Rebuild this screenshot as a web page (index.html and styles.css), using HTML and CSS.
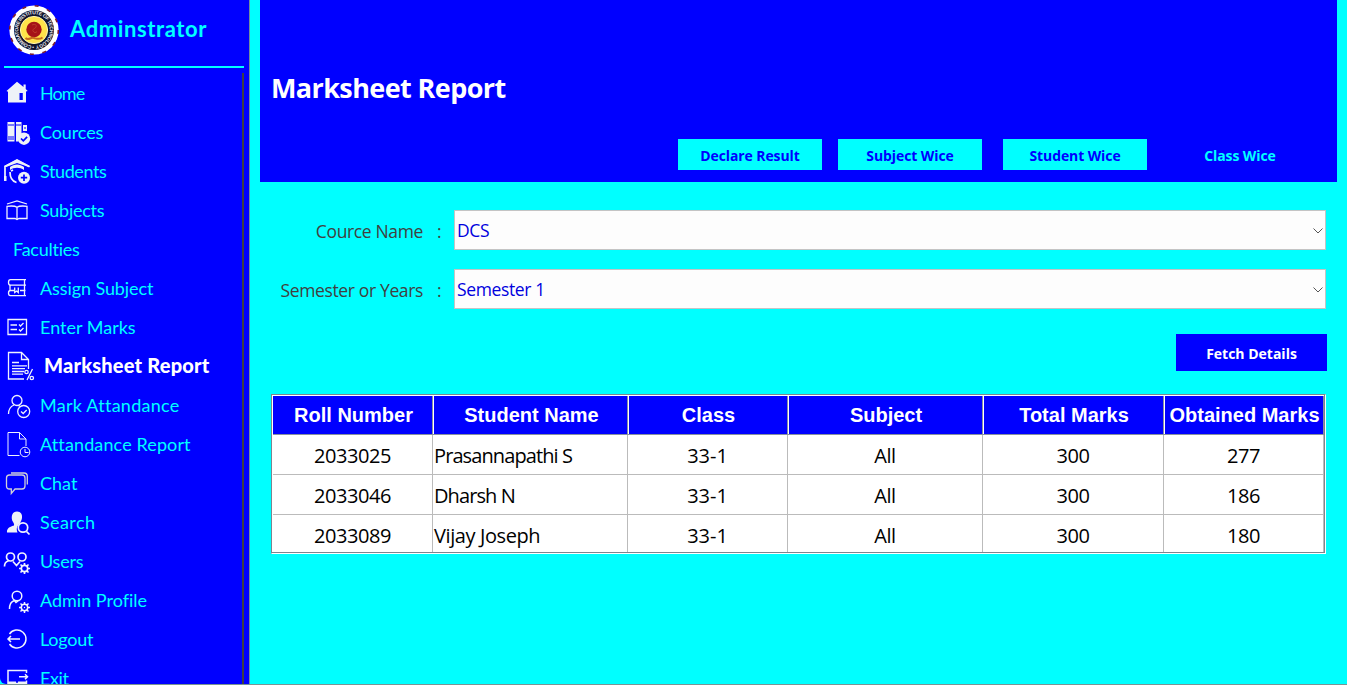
FILE: index.html
```html
<!DOCTYPE html>
<html lang="en">
<head>
<meta charset="utf-8">
<title>Marksheet Report</title>
<link rel="stylesheet" href="styles.css">
</head>
<body>
<div class="app">
  <aside class="sidebar">
    <header class="brand">
      <svg class="logo" viewBox="0 0 52 52">
        <defs><path id="ring" d="M26 41.800A15.800 15.800 0 1 1 26.100 41.800"/></defs>
        <circle cx="26" cy="26" r="24.600" fill="#fff"/>
        <circle cx="26" cy="26" r="24.300" fill="none" stroke="#7b1a2c" stroke-width="1.600" stroke-dasharray="4 8.720"/>
        <circle cx="26" cy="26" r="20" fill="#10142e"/>
        <circle cx="26" cy="26" r="13.600" fill="#ffe34a" stroke="#fff6b0" stroke-width="1"/>
        <circle cx="26" cy="25.500" r="7.700" fill="#a51218"/>
        <path d="M24 21c3-1.500 5 0 4 2s-4 2-3 4 3 2 4 .5" fill="none" stroke="#c04a30" stroke-width=".7"/>
        <path d="M17.500 34c3 3 5-1 8.500 0s5 2 8.500-.5" fill="none" stroke="#c86a20" stroke-width="2"/>
        <text class="logo-text"><textPath href="#ring" textLength="97">• COIMBATORE INSTITUTE OF TECHNOLOGY</textPath></text>
      </svg>
      <span class="brand-name">Adminstrator</span>
    </header>
    <nav class="menu">
      <a class="item home"><svg class="icon" viewBox="0 0 36 39"><path class="f" d="M17 7.700 23.500 13v-2.500h2.200V15l2 2-1.700.6V28.500H8V17.700L6.500 17Z"/><path class="b" d="M19.500 19h3.300v7h-3.300z"/></svg><span>Home</span></a>
      <a class="item cources"><svg class="icon" viewBox="0 0 36 39"><path class="f" d="M7.500 9H14.500v19.500h-7zM16 9h5.500v12l-3 4v3.500H16zM23 12h4v6h-4z"/><path class="bl" d="M8 12h6M8 24h6M8 26h6M16 12h5M24 15h2"/><circle class="f" cx="24" cy="25.700" r="6.200"/><path class="bl w" d="m21 25.500 2.300 2.300 3.800-4"/></svg><span>Cources</span></a>
      <a class="item students"><svg class="icon" viewBox="0 0 36 39"><path class="s w" d="M5 28.500V14.500L17 8.500l12.500 6.300"/><path class="f" d="M17 7 30 14l-1 1-12-4-11 4-2-1ZM10 15c4-3.500 10-3.500 14 0v3c-4-3-10-3-14 0zM4 24h2.500v5H4z"/><path class="s w" d="M10 20c0 6 3 9.500 6.500 10.500M11 19l2-1"/><circle class="f" cx="24" cy="25.700" r="6"/><path class="bl w" d="M24 22.500v6.400M20.800 25.700h6.400"/></svg><span>Students</span></a>
      <a class="item subjects"><svg class="icon" viewBox="0 0 36 39"><path class="s" d="m7 13 10-3 10 3M7 15.300c4-.5 8-.5 10 1 2-1.500 6-1.500 10-1V27.500H19l-2 1-2-1H7ZM17 16v12"/></svg><span>Subjects</span></a>
      <a class="item faculties bare"><span>Faculties</span></a>
      <a class="item assign"><svg class="icon" viewBox="0 0 36 39"><path class="s" d="M26 10.700H10.500q-2 0-2 2.700t2 2.800H26M24.500 11v5M10 16.500v4.500M24.500 16.500v4.500M14 21.500H9.500M25.500 21.500H20M10.500 21.500q-2 0-2 2.500t2 2.700H26M24.500 22v4"/><path class="s" d="M14.700 18.500v5l2-1.500 1.600 1.500v-5"/></svg><span>Assign Subject</span></a>
      <a class="item enter"><svg class="icon" viewBox="0 0 36 39"><path class="s" d="M8 11.500h18.500v15H8zM10.500 17h6.500M10.500 21.500h6.500M19 16.500l1.500 1.500 3-3M19 21.500l1.500 1.500 3-3"/></svg><span>Enter Marks</span></a>
      <a class="item active marksheet"><svg class="icon" viewBox="0 0 36 39"><path class="s" d="M24 32H8.500V5.500h13l7 7V22M21.500 5.500v7h7M12 15.500h7M12 18.800h15M12 21.700h13M12 24.500h12M12 27.200h11M32.500 22 27 33"/><circle class="s" cx="26.500" cy="25" r="1.700"/><circle class="s" cx="31.800" cy="31" r="1.700"/></svg><span>Marksheet Report</span></a>
      <a class="item markatt"><svg class="icon" viewBox="0 0 36 39"><circle class="s" cx="17" cy="14.500" r="5"/><path class="s" d="M8.500 28c0-5 2-7.500 5.500-9M18 19.500l2 .7"/><circle class="s" cx="23.700" cy="25.500" r="6"/><path class="s" d="m21 25.500 2.200 2 3.500-3.500"/></svg><span>Mark Attandance</span></a>
      <a class="item attrep"><svg class="icon" viewBox="0 0 36 39"><path class="s t" d="M19.500 30.500H8V7.500h11.500l6.500 6.500v7M19.500 7.500v6.500H26"/><circle class="s t" cx="25" cy="27" r="4.800"/><path class="s t" d="M25 24v3.500h3.500"/></svg><span>Attandance Report</span></a>
      <a class="item chat"><svg class="icon" viewBox="0 0 36 39"><path class="s c" d="M9.500 11H22q3 0 3 3v8q0 3-3 3H15l-3.700 4.500v-4.500H9.500q-3 0-3-3v-8q0-3 3-3ZM11 9H24q3.300 0 3.300 3.300V20.500"/></svg><span>Chat</span></a>
      <a class="item search"><svg class="icon" viewBox="0 0 36 39"><path class="f" d="M17 8.500c4 0 5.500 3 5 6.500-.4 2.500-1.500 3.500-2 5.500-3 2-4 5-2.500 9H7c-.3-4 2-5.500 7-7 .6-2-1-3-1.800-5-1.200-5 .3-9 4.800-9Z"/><circle class="s w" cx="23" cy="24.500" r="4.700"/><path class="s w" d="m26.500 28.500 3 3"/></svg><span>Search</span></a>
      <a class="item users"><svg class="icon" viewBox="0 0 36 39"><circle class="s w" cx="10.500" cy="15" r="4"/><circle class="s w" cx="22" cy="15" r="4"/><path class="s w" d="M4.500 24.500c0-3 1.500-5 4-5.500M13 19.500l3.500 4 3.500-4M16.500 24v-2"/><circle class="s w" cx="24.500" cy="26.500" r="3.200"/><path class="s w" d="M24.500 21v2M24.500 30v2M19 26.500h2M28 26.500h2M20.500 22.500l1.500 1.500M27 29l1.500 1.500M28.500 22.500 27 24M22 29l-1.500 1.500"/></svg><span>Users</span></a>
      <a class="item profile"><svg class="icon" viewBox="0 0 36 39"><circle class="s m" cx="17" cy="15" r="4.800"/><path class="s m" d="M9.500 28c0-5 1.500-7.500 5-8.500l1.500 2 2-1.500"/><circle class="s m" cx="24.500" cy="26.500" r="3.200"/><path class="s m" d="M24.500 21v2M24.500 30v2M19 26.500h2M28 26.500h2M20.500 22.500l1.500 1.500M27 29l1.500 1.500M28.500 22.500 27 24M22 29l-1.500 1.500"/><circle class="f" cx="24.500" cy="26.500" r=".7"/></svg><span>Admin Profile</span></a>
      <a class="item logout"><svg class="icon" viewBox="0 0 36 39"><path class="s m" d="M9.500 14A9 9 0 1 1 9.500 24M20 19H8.500M11 16l-3 3 3 3"/></svg><span>Logout</span></a>
      <a class="item exit"><svg class="icon" viewBox="0 0 36 39"><path class="s m" d="M26.500 14v-2.500H8V24.500h18.500v-3M19 17.700h8.500M25 15.200l2.500 2.500-2.500 2.500"/><path class="f" d="M8 22.500h8V25H8zM18 22.500h9V25h-9z"/></svg><span>Exit</span></a>
    </nav>
  </aside>
  <main class="main">
    <header class="banner">
      <h1>Marksheet Report</h1>
      <div class="tabs">
        <button class="tab">Declare Result</button>
        <button class="tab">Subject Wice</button>
        <button class="tab">Student Wice</button>
        <button class="tab current">Class Wice</button>
      </div>
    </header>
    <section class="form">
      <div class="field course-field">
        <label>Cource Name</label><i>:</i>
        <div class="select"><span>DCS</span><svg viewBox="0 0 10 6"><path d="m.5.5 4.500 4.500L9.500.5"/></svg></div>
      </div>
      <div class="field term-field">
        <label>Semester or Years</label><i>:</i>
        <div class="select"><span>Semester 1</span><svg viewBox="0 0 10 6"><path d="m.5.5 4.500 4.500L9.500.5"/></svg></div>
      </div>
      <button class="fetch">Fetch Details</button>
    </section>
    <div class="grid">
      <div class="row head"><span>Roll Number</span><span>Student Name</span><span>Class</span><span>Subject</span><span>Total Marks</span><span>Obtained Marks</span></div>
      <div class="row"><span>2033025</span><span class="snug">Prasannapathi S</span><span>33-1</span><span>All</span><span>300</span><span>277</span></div>
      <div class="row"><span>2033046</span><span class="snug">Dharsh N</span><span>33-1</span><span>All</span><span>300</span><span>186</span></div>
      <div class="row"><span>2033089</span><span>Vijay Joseph</span><span>33-1</span><span>All</span><span>300</span><span>180</span></div>
    </div>
  </main>
</div>
</body>
</html>
```
FILE: styles.css
```css
* { box-sizing: border-box; }
body { margin: 0; background: #0ff; overflow: hidden; }
button { border: 0; margin: 0; padding: 0; }
.app { display: flex; height: 685px; overflow: hidden; border-bottom: 1px solid #7a9494; }

.sidebar { width: 250px; flex: none; height: 684px; overflow: hidden; background: #00f; border-right: 1px solid #6f8fa0; border-bottom-left-radius: 6px; color: #0ff; font-family: Lato, sans-serif; font-variant-ligatures: none; }
.brand { display: flex; height: 68px; margin: 0 5px 0 4px; padding: 4px 0 0 4px; border-bottom: 2px solid #0ff; }
.logo { width: 52px; height: 52px; flex: none; }
.logo-text { font: bold 5px "Liberation Sans", sans-serif; fill: #e8e8ee; }
.brand-name { margin: 10px 0 0 10px; font-size: 22px; line-height: 30px; font-weight: 700; letter-spacing: .6px; white-space: nowrap; }
.menu { height: 612px; margin: 5px 5px 0 0; padding-top: 1px; overflow: hidden; border-right: 2px solid #404040; }
.item { display: flex; height: 39px; font-size: 18px; line-height: 38px; white-space: nowrap; }
.icon { width: 36px; height: 39px; flex: none; margin-right: 4px; }
.bare { padding-left: 13px; }
.active { color: #fff; font-size: 20px; font-weight: 900; line-height: 37px; letter-spacing: .2px; }
.active .icon { margin-right: 8px; }
.home { letter-spacing: -.9px; }
.cources { letter-spacing: -.1px; }
.students { letter-spacing: -.4px; }
.subjects, .faculties, .logout { letter-spacing: -.25px; }
.assign { letter-spacing: -.1px; }
.markatt { letter-spacing: .25px; }
.attrep { letter-spacing: .12px; }
.search { letter-spacing: .4px; }
.users { letter-spacing: -.2px; }
.exit { letter-spacing: -.4px; }
.f { fill: #eef2f8; }
.b { fill: #00f; }
.bl { fill: none; stroke: #00f; stroke-width: 1; }
.s { fill: none; stroke: #eef2ff; stroke-width: 1.3; }
.t { stroke-width: 1; }
.c { stroke: #d0d0d8; }
.m { stroke-width: 1.5; }
.w { stroke-width: 1.7; }

.main { flex: 1; padding-left: 10px; background: #0ff; }
.banner { width: 1077px; height: 182px; padding: 68px 25px 0 11px; background: #00f; }
.banner h1 { margin: 0 0 31px; height: 40px; color: #fff; font: 700 27px/40px "Open Sans", sans-serif; letter-spacing: -.6px; }
.tabs { display: grid; grid-template-columns: 144px 144px 144px 144px; column-gap: 21px; width: 634px; margin-left: 407px; }
.tabs { grid-template-columns: 139px 144px 144px 144px; }
.tab { height: 31px; color: #00f; background: #0ff; font: 700 14px/33px "Open Sans", sans-serif; letter-spacing: -.1px; white-space: nowrap; }
.tab:first-child { width: 144px; }
.tab.current { color: #0ff; background: #00f; }

.form { width: 1067px; padding-top: 28px; display: flex; flex-direction: column; }
.field { display: flex; height: 40px; margin-bottom: 19px; color: #404040; font: 17.5px/43px "Open Sans", sans-serif; letter-spacing: -.36px; }
.field label { width: 163px; text-align: right; white-space: nowrap; }
.field i { width: 31px; padding-left: 14px; font-style: normal; }
.select { width: 872px; height: 40px; display: flex; align-items: center; justify-content: space-between; padding: 1px 2px 0; background: #fdfdfd; border: 1px solid #c4c4c4; color: #00d; }
.select svg { width: 10px; height: 6px; fill: none; stroke: #555; stroke-width: 1; }
.fetch { width: 151px; height: 37px; align-self: flex-end; margin-top: 6px; color: #fff; background: #00f; font: 700 14px/39px "Open Sans", sans-serif; }

.grid { width: 1055px; height: 160px; margin: 23px 0 0 11px; overflow: hidden; border: 1px solid #fff; border-top-color: #7d8590; border-left-color: #7d8590; background: #fff; box-shadow: inset -1px -1px #7d8590; padding: 1px; }
.row { display: grid; grid-template-columns: 160px 195px 160px 195px 181px 160px; grid-template-rows: 100%; height: 40px; color: #000; font: 20px/42px "Open Sans", sans-serif; letter-spacing: -.4px; }
.row span { text-align: center; white-space: nowrap; border-right: 1px solid #bbb; border-bottom: 1px solid #bbb; }
.row span:nth-child(2) { text-align: left; padding-left: 1px; }
.row span:nth-child(3) { letter-spacing: 0; }
.row .snug { letter-spacing: -.9px; }
.row:last-child { height: 37px; }
.row:last-child span { border-bottom: 0; }
.head { height: 39px; color: #fff; font: 700 20px/39px "Liberation Sans", sans-serif; letter-spacing: 0; }
.head span { padding-left: 2px; background: #00f; border-color: #8890a0; box-shadow: inset 1px 0 #fff; }
.head span:nth-child(1) { box-shadow: none; }
.row.head span:nth-child(2) { text-align: center; padding-left: 3px; }
```
